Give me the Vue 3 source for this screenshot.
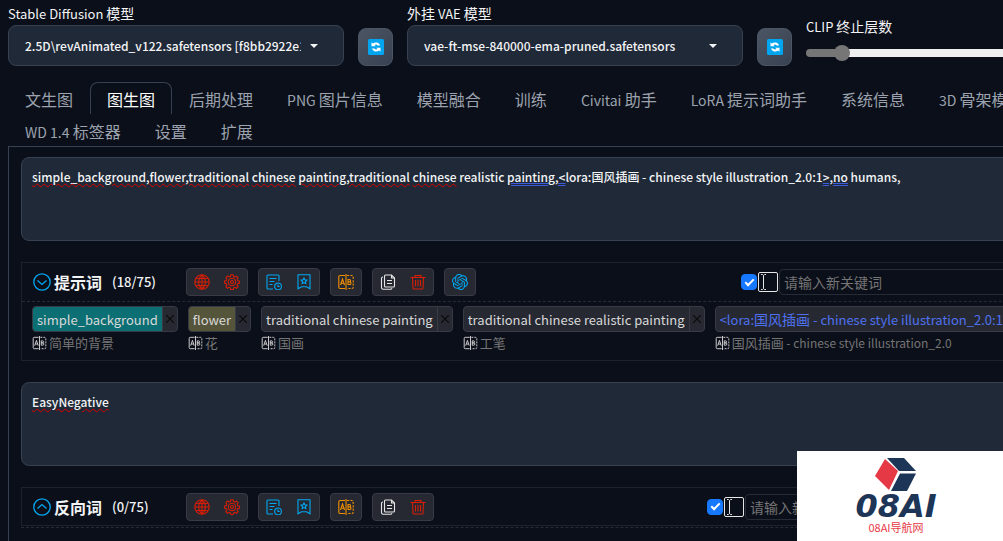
<script setup>
import { ref, computed, h } from 'vue'

const tabs = ['文生图', '图生图', '后期处理', 'PNG 图片信息', '模型融合', '训练', 'Civitai 助手', 'LoRA 提示词助手', '系统信息', '3D 骨架模型编辑', 'WD 1.4 标签器', '设置', '扩展']
const activeTab = ref(1)

const models = [
  { id: 'checkpoint', label: 'Stable Diffusion 模型', value: '2.5D\\revAnimated_v122.safetensors [f8bb2922e1]', refresh: '刷新模型' },
  { id: 'vae', label: '外挂 VAE 模型', value: 'vae-ft-mse-840000-ema-pruned.safetensors', refresh: '刷新 VAE' },
]

const clip = ref(2)
const clipFill = computed(() => ({ '--fill': ((clip.value - 1) / 11) * 100 + '%' }))

const sections = ref([
  {
    id: 'positive',
    title: '提示词',
    count: '(18/75)',
    open: true,
    parts: [
      { t: 'simple_background,flower,traditional', m: 'spell' }, { t: ' ' },
      { t: 'chinese', m: 'spell' }, { t: ' ' },
      { t: 'painting,traditional', m: 'spell' }, { t: ' ' },
      { t: 'chinese', m: 'spell' }, { t: ' realistic ' },
      { t: 'painting,<', m: 'grammar' }, { t: 'lora:国风插画 - chinese style illustration_2.0:1' },
      { t: '>,no', m: 'grammar' }, { t: ' humans,' },
    ],
    groups: [['globe', 'gear'], ['history', 'bookmark'], ['translate'], ['copy', 'trash'], ['openai']],
    tags: [
      { text: 'simple_background', zh: '简单的背景', tone: 'teal' },
      { text: 'flower', zh: '花', tone: 'olive' },
      { text: 'traditional chinese painting', zh: '国画', tone: '' },
      { text: 'traditional chinese realistic painting', zh: '工笔', tone: '' },
      { text: '<lora:国风插画 - chinese style illustration_2.0:1>', zh: '国风插画 - chinese style illustration_2.0', tone: 'lora' },
    ],
  },
  {
    id: 'negative',
    title: '反向词',
    count: '(0/75)',
    open: false,
    parts: [{ t: 'EasyNegative', m: 'spell' }],
    groups: [['globe', 'gear'], ['history', 'bookmark'], ['translate'], ['copy', 'trash']],
    tags: [],
  },
])
const prompts = ref(sections.value.map((s) => s.parts.map((p) => p.t).join('')))

const names = { globe: '语言', gear: '设置', history: '历史记录', bookmark: '收藏列表', translate: '翻译', copy: '复制', trash: '清空', openai: 'ChatGPT' }
const icons = {
  globe: ['M8 .8a7.2 7.2 0 1 0 0 14.400A7.200 7.200 0 0 0 8 .8z', 'M8 1v14M1 8h14M2.200 4.500h11.600M2.200 11.500h11.600', 'M8 1C3.600 4.500 3.600 11.500 8 15M8 1c4.400 3.500 4.400 10.500 0 14'],
  gear: ['M6.8.8h2.4l.4 1.8 1.3.5 1.6-1 1.6 1.6-1 1.6.6 1.4 1.7.3v2.4l-1.8.4-.5 1.3 1 1.6-1.6 1.6-1.6-1-1.3.6-.4 1.7H6.8l-.4-1.8-1.3-.5-1.6 1-1.6-1.6 1-1.6-.5-1.3-1.8-.4V7l1.8-.4.5-1.3-1-1.6L3.5 2l1.6 1 1.300-.5z', 'M8 4.300a3.700 3.700 0 1 0 0 7.400 3.700 3.700 0 0 0 0-7.400z', 'M8 6.500a1.500 1.500 0 1 0 0 3 1.500 1.500 0 0 0 0-3z'],
  history: ['M13 7V2a1 1 0 0 0-1-1H2a1 1 0 0 0-1 1v12a1 1 0 0 0 1 1h5', 'M3.500 4.500h7M3.500 7.500h5M3.500 10.500h3', 'M12 9a3.400 3.400 0 1 0 0 6.800A3.400 3.400 0 0 0 12 9z', 'M12 10.500v2h1.700'],
  bookmark: ['M2 .8h12v14l-3.500-2H5.500l-3.500 2z', 'M8 4l.9 1.800 2 .3-1.500 1.400.4 2L8 8.600l-1.800.9.4-2L5.100 6.100l2-.3z'],
  copy: ['M5.500 1h6l3 3v8a1 1 0 0 1-1 1h-8a1 1 0 0 1-1-1V2a1 1 0 0 1 1-1z', 'M11.500 1v3h3', 'M7 6.500h5M7 9.500h5', 'M3 3a1.500 1.500 0 0 0-1.500 1.500v9A1.700 1.700 0 0 0 3.200 15.200h7.300a1.500 1.500 0 0 0 1.500-1'],
  trash: ['M.5 3.500h15', 'M5 3.500v-2h6v2', 'M2.500 3.500l.5 10.500a1 1 0 0 0 1 1h8a1 1 0 0 0 1-1l.5-10.500', 'M5.500 6v6.500M8 6v6.500M10.500 6v6.500'],
}
const knot = 'M22.2819 9.8211a5.9847 5.9847 0 0 0-.5157-4.9108 6.0462 6.0462 0 0 0-6.5098-2.9A6.0651 6.0651 0 0 0 4.9807 4.1818a5.9847 5.9847 0 0 0-3.9977 2.9 6.0462 6.0462 0 0 0 .7427 7.0966 5.98 5.98 0 0 0 .511 4.9107 6.051 6.051 0 0 0 6.5146 2.9001A5.9847 5.9847 0 0 0 13.2599 24a6.0557 6.0557 0 0 0 5.7718-4.2058 5.9894 5.9894 0 0 0 3.9977-2.9001 6.0557 6.0557 0 0 0-.7475-7.0729zm-9.022 12.6081a4.4755 4.4755 0 0 1-2.8764-1.0408l.1419-.0804 4.7783-2.7582a.7948.7948 0 0 0 .3927-.6813v-6.7369l2.02 1.1686a.071.071 0 0 1 .038.052v5.5826a4.504 4.504 0 0 1-4.4945 4.4944zm-9.6607-4.1254a4.4708 4.4708 0 0 1-.5346-3.0137l.142.0852 4.783 2.7582a.7712.7712 0 0 0 .7806 0l5.8428-3.3685v2.3324a.0804.0804 0 0 1-.0332.0615L9.74 19.9502a4.4992 4.4992 0 0 1-6.1408-1.6464zM2.3408 7.8956a4.485 4.485 0 0 1 2.3655-1.9728V11.6a.7664.7664 0 0 0 .3879.6765l5.8144 3.3543-2.0201 1.1685a.0757.0757 0 0 1-.071 0l-4.8303-2.7865A4.504 4.504 0 0 1 2.3408 7.872zm16.5963 3.8558L13.1038 8.364 15.1192 7.2a.0757.0757 0 0 1 .071 0l4.8303 2.7913a4.4944 4.4944 0 0 1-.6765 8.1042v-5.6772a.79.79 0 0 0-.407-.667zm2.0107-3.0231l-.142-.0852-4.7735-2.7818a.7759.7759 0 0 0-.7854 0L9.409 9.2297V6.8974a.0662.0662 0 0 1 .0284-.0615l4.8303-2.7866a4.4992 4.4992 0 0 1 6.6802 4.66zM8.3065 12.863l-2.02-1.1638a.0804.0804 0 0 1-.038-.0567V6.0742a4.4992 4.4992 0 0 1 7.3757-3.4537l-.142.0805L8.704 5.459a.7948.7948 0 0 0-.3927.6813zm1.0976-2.3654l2.602-1.4998 2.6069 1.4998v2.9994l-2.5974 1.4997-2.6067-1.4997Z'

const Glyph = ({ name }) => {
  const base = { class: 'glyph', viewBox: '0 0 16 16', fill: 'none', stroke: 'currentColor', 'stroke-width': 1.1, 'aria-hidden': 'true' }
  if (name === 'translate') {
    return h('svg', base, [
      h('path', { d: 'M7 1.500H2a1.200 1.200 0 0 0-1.200 1.200v10.600A1.200 1.200 0 0 0 2 14.500h5' }),
      h('path', { d: 'M8 0v16' }),
      h('path', { d: 'M9 1.500h5a1.200 1.200 0 0 1 1.200 1.200v10.600a1.200 1.200 0 0 1-1.200 1.200H9', 'stroke-dasharray': '2.2 1.2' }),
      h('path', { d: 'M2.500 11L4.500 5l2 6M3.200 9.200h2.600' }),
      h('path', { d: 'M10 5.500v5h1.700a1.300 1.300 0 0 0 0-2.600H10h1.400a1.200 1.200 0 0 0 0-2.400z' }),
    ])
  }
  if (name === 'openai') {
    return h('svg', { class: 'glyph', viewBox: '0 0 24 24', fill: 'currentColor', 'aria-hidden': 'true' }, [h('path', { d: knot })])
  }
  return h('svg', base, icons[name].map((d) => h('path', { d })))
}

// Latin runs are set slightly smaller than the Chinese ones beside them.
const Mixed = ({ text }) =>
  h('span', { class: 'mixed' }, text.split(/([\u4e00-\u9fff]+)/).filter(Boolean).map((t) =>
    h('span', { class: /[\u4e00-\u9fff]/.test(t) ? 'han' : 'latin' }, t)))
</script>

<template>
  <div class="viewport">
    <main class="page">
      <header class="quick">
        <template v-for="m in models" :key="m.id">
          <div class="field">
            <label :for="m.id"><Mixed :text="m.label" /></label>
            <div class="select">
              <select :id="m.id"><option>{{ m.value }}</option></select>
              <svg class="caret" viewBox="0 0 8 4" aria-hidden="true"><path d="M0 0h8L4 4z" fill="currentColor" /></svg>
            </div>
          </div>
          <button type="button" class="refresh" :aria-label="m.refresh">
            <svg viewBox="0 0 16 16" aria-hidden="true">
              <rect width="16" height="16" rx="1.5" fill="#00a4ef" />
              <path d="M3.500 7.200V3.200l1.400 1.300a4.600 4.600 0 0 1 7.300 1.900h-2.500a2.500 2.500 0 0 0-3.200-.5l1.300 1.300zM12.500 8.800v4l-1.400-1.300a4.600 4.600 0 0 1-7.300-1.900h2.500a2.500 2.500 0 0 0 3.200.5L8.200 8.800z" fill="#fff" />
            </svg>
          </button>
        </template>
        <div class="field clip">
          <label for="clip"><Mixed text="CLIP 终止层数" /></label>
          <input id="clip" v-model.number="clip" type="range" min="1" max="12" :style="clipFill" />
        </div>
      </header>

      <nav class="tabs">
        <button v-for="(t, i) in tabs" :key="t" type="button" :class="{ active: i === activeTab }" @click="activeTab = i">
          <Mixed :text="t" />
        </button>
      </nav>

      <div class="panel">
        <template v-for="(s, i) in sections" :key="s.id">
          <div class="prompt">
            <textarea v-model="prompts[i]" spellcheck="false" :aria-label="s.title"></textarea>
            <div class="marks" aria-hidden="true"><span v-for="(p, k) in s.parts" :key="k" :class="p.m">{{ p.t }}</span></div>
          </div>

          <section class="keywords" :class="s.id">
            <div class="bar">
              <button type="button" class="fold" :aria-label="s.open ? '收起' : '展开'" @click="s.open = !s.open">
                <svg viewBox="0 0 18 18" fill="none" stroke="currentColor" stroke-width="1.3" aria-hidden="true">
                  <circle cx="9" cy="9" r="8.2" />
                  <path :d="s.open ? 'M4.500 7.500L9 11.500l4.500-4' : 'M4.500 10.500L9 6.500l4.500 4'" />
                </svg>
              </button>
              <h2>{{ s.title }}</h2>
              <span class="count">{{ s.count }}</span>
              <div class="groups">
                <div v-for="g in s.groups" :key="g[0]" class="group">
                  <button v-for="n in g" :key="n" type="button" :class="n" :aria-label="names[n]"><Glyph :name="n" /></button>
                </div>
              </div>
              <div class="adder">
                <input type="checkbox" checked aria-label="启用输入框" />
                <svg class="ibeam" viewBox="0 0 20 20" fill="none" stroke="currentColor" aria-hidden="true">
                  <rect x="0.5" y="0.5" width="19" height="19" rx="1.5" />
                  <path d="M3 2.500h1.500l1 1 1-1H8M5.500 3.500v13M3 17.500h1.500l1-1 1 1H8" />
                </svg>
                <input type="text" placeholder="请输入新关键词" aria-label="请输入新关键词" />
              </div>
            </div>
            <ul v-if="s.tags.length" class="tags">
              <li v-for="t in s.tags" :key="t.text">
                <div class="tag" :class="t.tone">
                  <button type="button" class="word"><Mixed :text="t.text" /></button>
                  <button type="button" class="remove" aria-label="删除">
                    <svg viewBox="0 0 8 8" stroke="currentColor" stroke-width="1.2" aria-hidden="true"><path d="M0 0l8 8M8 0L0 8" /></svg>
                  </button>
                </div>
                <div class="zh"><Glyph name="translate" /><Mixed :text="t.zh" /></div>
              </li>
            </ul>
          </section>
          <div v-if="!s.tags.length" class="divider"></div>
        </template>
      </div>
    </main>

    <aside class="brand">
      <svg viewBox="0 0 42 34" aria-hidden="true">
        <path d="M10 1l13 12-9 19L0 18z" fill="#e63946" />
        <path d="M12 0h17l12 13H24z" fill="#1d3557" />
        <path d="M25 15.500h16L32 33H16z" fill="#1d3557" />
      </svg>
      <strong>08AI</strong>
      <small>08AI导航网</small>
    </aside>
  </div>
</template>

<style>
html, body, #app { height: 100%; }
body { margin: 0; background: #0b0f19; }
</style>

<style scoped>
.viewport {
  height: 100%;
  overflow: hidden;
  background: #0b0f19;
  color: #f3f4f6;
  font: 14px/20px "Noto Sans CJK SC", sans-serif;
}
.viewport :deep(.latin) { font-size: 13px; }
button, input, select, textarea { font: inherit; color: inherit; margin: 0; padding: 0; box-sizing: border-box; }
button { border: 0; background: none; cursor: pointer; }
.page { width: calc(100% + 136px); padding: 3px 8px 0; box-sizing: border-box; }

.quick { display: flex; align-items: flex-end; gap: 14px; }
.field { width: 336px; }
.field label { display: block; height: 22px; white-space: nowrap; }
.select { display: grid; align-items: center; }
.select > * { grid-area: 1 / 1; }
.select select {
  appearance: none; width: 100%; height: 41px; padding: 0 42px 0 16px;
  border: 1px solid #374151; border-radius: 8px; background: #1f2937; font-size: 12px; font-weight: 500;
}
.caret { justify-self: end; width: 8px; height: 4px; margin-right: 26px; pointer-events: none; }
.refresh {
  width: 35px; height: 38px; flex: none; display: grid; place-items: center;
  border: 1px solid #4b5563; border-radius: 8px; background: linear-gradient(135deg, #4b5563, #374151);
}
.refresh svg { width: 16px; height: 16px; }
.clip { flex: 1; width: auto; padding-bottom: 5px; }
.clip label { height: 29px; }
.clip input {
  display: block; appearance: none; width: 100%; height: 16px; background: none;
}
.clip input::-webkit-slider-runnable-track {
  height: 8px; border-radius: 4px; background: linear-gradient(90deg, #767676 calc(var(--fill) + 4px), #efefef 0);
}
.clip input::-webkit-slider-thumb { appearance: none; width: 16px; height: 16px; margin-top: -4px; border-radius: 50%; background: #767676; }

.tabs { display: flex; flex-wrap: wrap; margin-top: 16px; }
.tabs button {
  height: 32px; padding: 0 16px; border: 1px solid transparent; border-bottom: 0; border-radius: 8px 8px 0 0;
  color: #9ca3af; font-size: 16px; line-height: 32px; white-space: nowrap;
}
.tabs :deep(.latin) { font-size: 14px; }
.tabs .active { color: #fff; border-color: #374151; }

.panel { border: 1px solid #374151; padding: 10px 12px 24px; }
.prompt { display: grid; line-height: 20px; font-size: 12px; font-weight: 500; }
.prompt > * { grid-area: 1 / 1; box-sizing: border-box; padding: 9px 10px; border: 1px solid #374151; }
.prompt textarea { display: block; width: 100%; height: 84px; resize: none; border-radius: 8px; background: #1f2937; }
.prompt .marks { border-color: transparent; color: transparent; pointer-events: none; white-space: pre-wrap; z-index: 1; }
.marks .spell { text-decoration: underline wavy #e00000 1px; }
.marks .grammar { text-decoration: underline double #3b5bdb 1px; }

.keywords { margin: 21px 0; border: 1px solid #1d222c; }
.keywords.negative { margin-bottom: 1px; }
.bar { display: flex; align-items: center; height: 38px; padding-left: 10px; border-bottom: 1px dashed #272b36; }
.negative .bar { border-bottom: 0; height: 37px; }
.divider { border-top: 1px dashed #272b36; }
.fold { width: 20px; height: 20px; display: grid; place-items: center; color: #00a8f3; }
.fold svg { width: 18px; height: 18px; }
h2 { margin: 0 10px 0 2px; font-size: 16px; line-height: 20px; font-weight: 700; }
.count { width: 74px; font-size: 13px; font-weight: 500; }
.groups { display: flex; gap: 10px; }
.group { display: flex; border: 1px solid #383b45; border-radius: 4px; background: #262932; }
.group button { width: 30px; height: 26px; display: grid; place-items: center; }
.group :deep(.glyph) { width: 16px; height: 16px; }
.globe, .gear, .trash { color: #d81e06; }
.history, .bookmark, .openai { color: #00a8f3; }
.translate { color: #ef8f00; }
.copy { color: #e6e6e6; }
.adder { display: flex; align-items: center; width: 376px; margin-left: auto; }
.negative .adder { width: 410px; }
.adder input[type="checkbox"] {
  appearance: none; width: 16px; height: 16px; border-radius: 4px; flex: none;
  border: 1px solid #1677ff; display: grid; place-items: center;
}
.adder input[type="checkbox"]:checked { background: #1677ff; }
.adder input[type="checkbox"]:checked::after {
  content: ""; width: 3px; height: 7px; margin-bottom: 2px; border: solid #fff; border-width: 0 2px 2px 0; rotate: 45deg;
}
.ibeam { width: 20px; height: 20px; margin: 0 1px; flex: none; color: #e6e6e6; }
.adder input[type="text"] { flex: 1; height: 26px; padding: 0 4px; border: 1px solid #272b36; border-radius: 4px; background: none; }
.adder input::placeholder { color: #757575; opacity: 1; }

.tags { display: flex; gap: 10px; margin: 0; padding: 4px 10px 6px; list-style: none; }
.tags li { flex: none; }
.tag { display: flex; height: 26px; box-sizing: border-box; border: 1px solid #383b45; border-radius: 4px; background: #262932; overflow: hidden; }
.word { padding: 0 4px; border-right: 1px solid #383b45; line-height: 22px; white-space: nowrap; color: #d8d8d8; }
.teal .word { background: #0b6f74; }
.olive .word { background: #55553c; }
.lora .word { color: #4f71f0; }
.remove { width: 14px; display: grid; place-items: center; color: #0a0a0a; }
.remove svg { width: 8px; height: 8px; }
.zh { display: flex; align-items: center; gap: 2px; height: 22px; color: #757575; font-size: 13px; line-height: 18px; white-space: nowrap; }
.zh :deep(.latin) { font-size: 12px; }
.zh :deep(.glyph) { width: 15px; height: 14px; color: #d0d0d0; }

.brand {
  position: fixed; right: 0; bottom: 0; width: 206px; height: 90px; box-sizing: border-box; padding: 7px 8px 0 0;
  display: flex; flex-direction: column; align-items: center; background: #fff; color: #1d3557;
}
.brand svg { width: 42px; height: 34px; }
.brand strong { font: italic 700 32px/29px "DejaVu Sans", sans-serif; }
.brand small { font-size: 11px; line-height: 12px; color: #e63946; }
</style>
